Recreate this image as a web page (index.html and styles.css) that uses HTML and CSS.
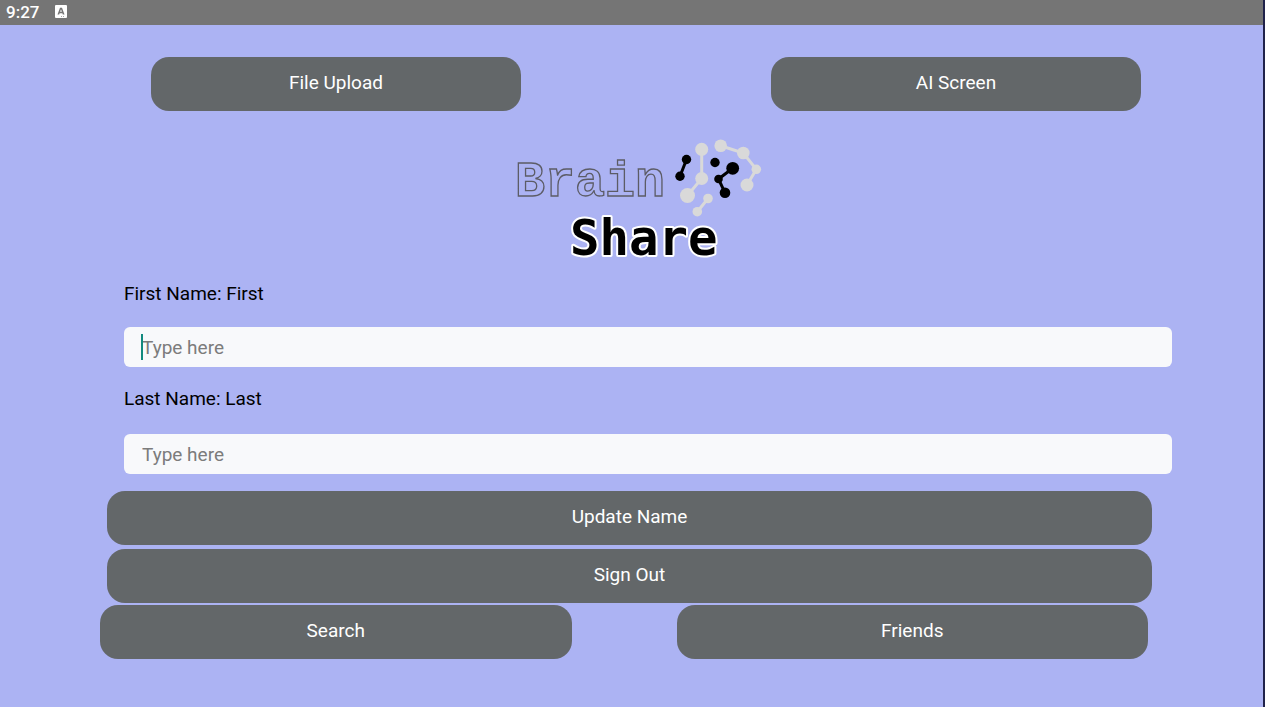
FILE: index.html
```html
<!DOCTYPE html>
<html lang="en">
<head>
<meta charset="utf-8">
<meta name="viewport" content="width=device-width, initial-scale=1">
<title>Brain Share</title>
<link rel="stylesheet" href="styles.css">
</head>
<body>
<div class="screen">
  <header class="status-bar">
    <span class="clock">9:27</span>
    <svg class="status-icon" viewBox="0 0 12 13" aria-hidden="true">
      <rect width="12" height="13" rx="1" fill="#fff"/>
      <path d="M2.500 9.500 L5 2.700 H7 L9.500 9.500 H7.800 L7.400 8.200 H4.600 L4.200 9.500 Z M5.100 6.800 H6.900 L6 4.300 Z" fill="#757575" fill-rule="evenodd"/>
      <path d="M6 11h1v1H6zM8 11h1v1H8z" fill="#aaa"/>
    </svg>
  </header>
  <main class="content">
    <nav class="button-row top-row">
      <button class="button" type="button">File Upload</button>
      <button class="button" type="button">AI Screen</button>
    </nav>
    <svg class="logo" viewBox="0 0 270 140" role="img" aria-label="Brain Share">
      <text class="logo-brain" x="10" y="66">Brain</text>
      <text class="logo-share" x="65" y="125">Share</text>
      <g class="nodes-light">
        <path d="M196.700 19.300V48.500L182.500 65.500M215.700 15.700L238.300 23L251.300 39.300L242 55M203 68.500L192.300 81.700"/>
        <circle cx="196.700" cy="19.300" r="6.500"/>
        <circle cx="196.700" cy="48.500" r="6.500"/>
        <circle cx="182.500" cy="65.500" r="7.500"/>
        <circle cx="215.700" cy="15.700" r="6.300"/>
        <circle cx="238.300" cy="23" r="6.300"/>
        <circle cx="251.300" cy="39.300" r="4.800"/>
        <circle cx="242" cy="55" r="6.500"/>
        <circle cx="203" cy="68.500" r="4.800"/>
        <circle cx="192.300" cy="81.700" r="4.800"/>
      </g>
      <g class="nodes-dark">
        <path d="M181.500 29.500L175 46.300M227.700 38.300L213.500 49L220 62.800"/>
        <circle cx="181.500" cy="29.500" r="4.700"/>
        <circle cx="175" cy="46.300" r="4.700"/>
        <circle cx="210" cy="32.500" r="4.700"/>
        <circle cx="227.700" cy="38.300" r="6.400"/>
        <circle cx="213.500" cy="49" r="4.300"/>
        <circle cx="220" cy="62.800" r="5.300"/>
      </g>
    </svg>
    <form class="name-form">
      <div class="fields">
        <div class="field">
          <label class="label" for="first-name">First Name: First</label>
          <div class="input-wrap">
            <input class="input" id="first-name" type="text" placeholder="Type here">
            <span class="caret"></span>
          </div>
        </div>
        <div class="field last-name">
          <label class="label" for="last-name">Last Name: Last</label>
          <div class="input-wrap">
            <input class="input" id="last-name" type="text" placeholder="Type here">
          </div>
        </div>
      </div>
      <div class="actions">
        <button class="button" type="button">Update Name</button>
        <button class="button" type="button">Sign Out</button>
      </div>
    </form>
    <nav class="button-row bottom-row">
      <button class="button" type="button">Search</button>
      <button class="button" type="button">Friends</button>
    </nav>
  </main>
</div>
</body>
</html>
```
FILE: styles.css
```css
* {
  box-sizing: border-box;
}

body {
  margin: 0;
  font-family: Roboto, sans-serif;
  font-size: 19px;
  line-height: 24px;
}

.screen {
  min-height: 100vh;
  background: #acb3f3;
  border-right: 2px solid #20224a;
}

.status-bar {
  display: flex;
  align-items: center;
  gap: 16px;
  height: 25px;
  padding: 0 6px 2px;
  background: #757575;
  color: #fff;
}

.clock {
  font-size: 17px;
  font-weight: 500;
}

.status-icon {
  width: 12px;
  height: 13px;
}

.content {
  display: flex;
  flex-direction: column;
  padding: 32px 0;
}

.button-row {
  display: flex;
  justify-content: space-between;
}

.top-row {
  padding: 0 122px 0 151px;
}

.top-row .button {
  width: 370px;
}

.bottom-row {
  gap: 105px;
  padding: 0 115px 0 100px;
}

.bottom-row .button {
  flex: 1;
}

.button {
  height: 54px;
  padding: 0 16px 3px;
  border: 0;
  border-radius: 18px;
  background: #636769;
  color: #fff;
  font: inherit;
}

.logo {
  align-self: center;
  width: 270px;
  height: 140px;
  margin: 19px 0 12px 17px;
}

.logo-brain {
  font: bold 50px "Liberation Mono", monospace;
  fill: none;
  stroke: #5c5c66;
  stroke-width: 1.3px;
}

.logo-share {
  font: bold 49px "DejaVu Sans Mono", monospace;
  fill: #000;
  stroke: #fff;
  stroke-width: 4px;
  stroke-linejoin: round;
  paint-order: stroke;
}

.nodes-light {
  fill: #d9d9d9;
}

.nodes-dark {
  fill: #000;
}

.nodes-light path,
.nodes-dark path {
  fill: none;
  stroke-width: 3px;
}

.nodes-light path {
  stroke: #d9d9d9;
}

.nodes-dark path {
  stroke: #000;
}

.fields {
  display: flex;
  flex-direction: column;
  gap: 20px;
  margin-bottom: 17px;
  padding: 0 91px 0 124px;
}

.field {
  display: flex;
  flex-direction: column;
  gap: 21px;
}

.last-name {
  gap: 23px;
}

.input-wrap {
  position: relative;
}

.input {
  display: block;
  width: 100%;
  height: 40px;
  padding: 0 18px;
  border: 0;
  border-radius: 6px;
  outline: 0;
  background: #f8f9fb;
  color: #000;
  font: inherit;
}

.input::placeholder {
  color: #7c7c7c;
  opacity: 1;
}

.caret {
  position: absolute;
  top: 7px;
  left: 17px;
  width: 2px;
  height: 26px;
  background: #128a7e;
}

.actions {
  display: flex;
  flex-direction: column;
  gap: 4px;
  margin-bottom: 2px;
  padding: 0 111px 0 107px;
}
```
